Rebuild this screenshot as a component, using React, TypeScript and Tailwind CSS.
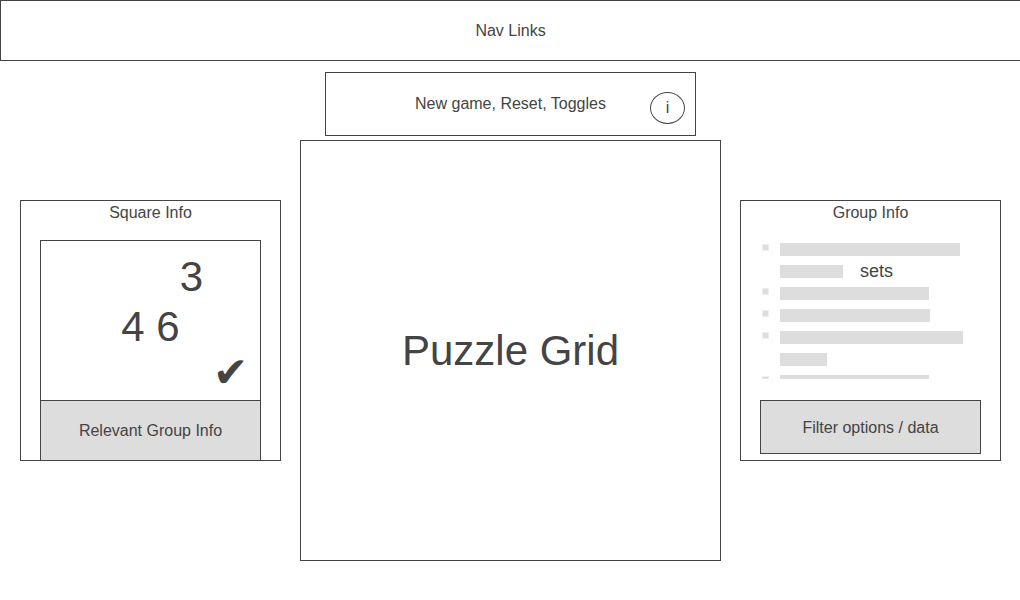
type Bar = { width: string; bulleted: boolean; label?: string };

const bars: Bar[] = [
  { width: "w-[180px]", bulleted: true },
  { width: "w-[63px]", bulleted: false, label: "sets" },
  { width: "w-[149px]", bulleted: true },
  { width: "w-[150px]", bulleted: true },
  { width: "w-[183px]", bulleted: true },
  { width: "w-[47px]", bulleted: false },
  { width: "w-[149px]", bulleted: true },
];

function NavBar() {
  return (
    <nav className="border-y border-l border-[#444] py-[18px] text-center leading-[23px]">
      Nav Links
    </nav>
  );
}

function Toolbar() {
  return (
    <div className="mx-[25px] grid h-16 grid-cols-[1fr_auto_1fr] items-center border border-[#444]">
      <span className="col-start-2">New game, Reset, Toggles</span>
      <button
        type="button"
        aria-label="Game information"
        className="mr-2.5 mt-2 flex h-8 w-[35px] items-center justify-center justify-self-end rounded-[50%] border border-[#444]"
      >
        i
      </button>
    </div>
  );
}

function SquareInfo() {
  return (
    <section className="mt-[139px] border border-[#444] px-[19px]">
      <h2 className="text-center leading-[23px]">Square Info</h2>
      <div className="-mb-px mt-4 border border-[#444]">
        <div className="pb-[7px] pt-[11px] text-center text-[42px] leading-[50px]">
          <p className="pl-[82px]">3</p>
          <p>4 6</p>
          <p className="h-[41px] pl-40 font-['DejaVu_Sans',sans-serif] leading-[41px]">✔</p>
        </div>
        <p className="border-t border-[#444] bg-[#ddd] py-[18px] text-center leading-[23px]">
          Relevant Group Info
        </p>
      </div>
    </section>
  );
}

function GroupInfo() {
  return (
    <section className="mt-[139px] border border-[#444] px-[19px] pb-1.5">
      <h2 className="text-center leading-[23px]">Group Info</h2>
      <ul className="mt-[14px] h-[141px] overflow-hidden">
        {bars.map((bar, index) => (
          <li key={index} className="flex h-[22px] items-center pl-0.5">
            <span
              className={
                bar.bulleted
                  ? "mb-1 size-[7px] border border-[#eee] bg-[#ddd]"
                  : "size-[7px]"
              }
            />
            <span className={`ml-[11px] h-[13px] bg-[#ddd] ${bar.width}`} />
            {bar.label && <span className="ml-[17px] text-lg leading-[22px]">{bar.label}</span>}
          </li>
        ))}
      </ul>
      <button
        type="button"
        className="mt-[21px] block w-full border border-[#444] bg-[#ddd] pb-[13px] pt-[15px] leading-6"
      >
        Filter options / data
      </button>
    </section>
  );
}

export default function App() {
  return (
    <div className="min-h-screen bg-white font-['Liberation_Sans',Arial,sans-serif] text-base text-[#444]">
      <NavBar />
      <main className="grid grid-cols-[261fr_421fr_261fr] items-start gap-[19px] pl-5 pr-[19px]">
        <SquareInfo />
        <div className="mt-[11px] flex flex-col gap-1">
          <Toolbar />
          <section className="flex aspect-square items-center justify-center border border-[#444]">
            <h1 className="text-[42px] leading-[50px]">Puzzle Grid</h1>
          </section>
        </div>
        <GroupInfo />
      </main>
    </div>
  );
}
